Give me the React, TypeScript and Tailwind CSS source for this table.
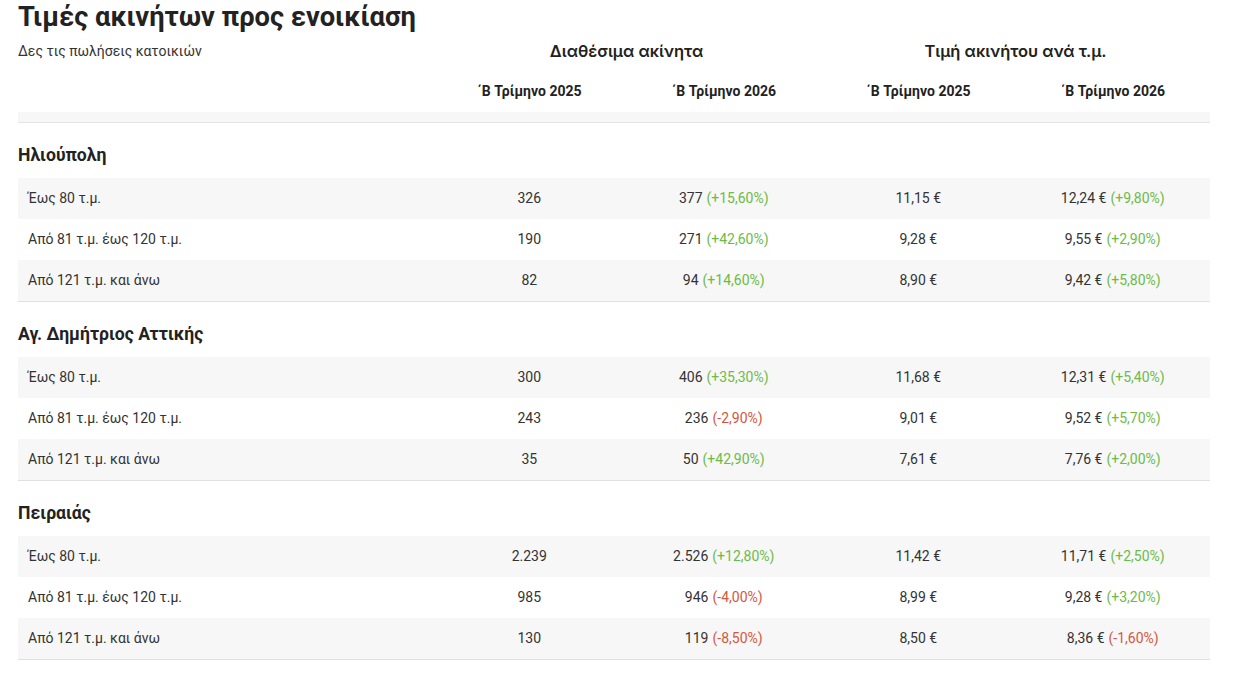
import React from 'react';

type Cell = { value: string; change?: string };
type Row = { label: string; cells: Cell[] };
type Area = { name: string; rows: Row[] };

const areas: Area[] = [
  {
    name: 'Ηλιούπολη',
    rows: [
      { label: 'Έως 80 τ.μ.', cells: [{ value: '326' }, { value: '377', change: '+15,60%' }, { value: '11,15 €' }, { value: '12,24 €', change: '+9,80%' }] },
      { label: 'Από 81 τ.μ. έως 120 τ.μ.', cells: [{ value: '190' }, { value: '271', change: '+42,60%' }, { value: '9,28 €' }, { value: '9,55 €', change: '+2,90%' }] },
      { label: 'Από 121 τ.μ. και άνω', cells: [{ value: '82' }, { value: '94', change: '+14,60%' }, { value: '8,90 €' }, { value: '9,42 €', change: '+5,80%' }] },
    ],
  },
  {
    name: 'Αγ. Δημήτριος Αττικής',
    rows: [
      { label: 'Έως 80 τ.μ.', cells: [{ value: '300' }, { value: '406', change: '+35,30%' }, { value: '11,68 €' }, { value: '12,31 €', change: '+5,40%' }] },
      { label: 'Από 81 τ.μ. έως 120 τ.μ.', cells: [{ value: '243' }, { value: '236', change: '-2,90%' }, { value: '9,01 €' }, { value: '9,52 €', change: '+5,70%' }] },
      { label: 'Από 121 τ.μ. και άνω', cells: [{ value: '35' }, { value: '50', change: '+42,90%' }, { value: '7,61 €' }, { value: '7,76 €', change: '+2,00%' }] },
    ],
  },
  {
    name: 'Πειραιάς',
    rows: [
      { label: 'Έως 80 τ.μ.', cells: [{ value: '2.239' }, { value: '2.526', change: '+12,80%' }, { value: '11,42 €' }, { value: '11,71 €', change: '+2,50%' }] },
      { label: 'Από 81 τ.μ. έως 120 τ.μ.', cells: [{ value: '985' }, { value: '946', change: '-4,00%' }, { value: '8,99 €' }, { value: '9,28 €', change: '+3,20%' }] },
      { label: 'Από 121 τ.μ. και άνω', cells: [{ value: '130' }, { value: '119', change: '-8,50%' }, { value: '8,50 €' }, { value: '8,36 €', change: '-1,60%' }] },
    ],
  },
];

const quarters = ['΄Β Τρίμηνο 2025', '΄Β Τρίμηνο 2026', '΄Β Τρίμηνο 2025', '΄Β Τρίμηνο 2026'];

function ValueCell({ cell }: { cell: Cell }) {
  const negative = cell.change?.startsWith('-');
  return (
    <div className="flex items-center justify-center">
      {cell.value}
      {cell.change && (
        <span className={`ml-1 ${negative ? 'text-[#d4573d]' : 'text-[#6dbb47]'}`}>({cell.change})</span>
      )}
    </div>
  );
}

export default function App() {
  return (
    <div className="min-h-screen bg-white font-['Roboto',sans-serif] text-[#333]">
      <div className="w-[1192px] ml-[18px]">
        <h1 className="h-[36px] text-[27.3px] leading-[34px] font-bold text-[#222]">Τιμές ακινήτων προς ενοικίαση</h1>

        {/* Table header */}
        <div className="grid grid-cols-[414px_repeat(4,1fr)]">
          <div className="h-[30px] flex items-center text-[14px] text-[#333]">Δες τις πωλήσεις κατοικιών</div>
          <div className="col-span-2 h-[30px] flex items-center justify-center font-['Inter',sans-serif] text-[16.5px] font-semibold text-[#222]">Διαθέσιμα ακίνητα</div>
          <div className="col-span-2 h-[30px] flex items-center justify-center font-['Inter',sans-serif] text-[16.5px] font-semibold text-[#222]">Τιμή ακινήτου ανά τ.μ.</div>

          <div className="h-[46px]" />
          {quarters.map((q, i) => (
            <div key={i} className="h-[46px] pt-[13px] leading-[24px] text-center text-[14px] font-bold text-[#222]">{q}</div>
          ))}
        </div>
        <div className="h-[11px] bg-[#f7f7f7] border-b border-[#e4e4e4]" />

        {/* Areas */}
        {areas.map((area) => (
          <div key={area.name} className="border-b border-[#e0e0e0]">
            <div className="h-[55px] pt-[20px] leading-[24px] text-[17.6px] font-bold text-[#222]">{area.name}</div>
            {area.rows.map((row, idx) => (
              <div
                key={row.label}
                className={`grid grid-cols-[414px_repeat(4,1fr)] h-[41px] items-center text-[14px] ${idx % 2 === 0 ? 'bg-[#f7f7f7]' : 'bg-white'}`}
              >
                <div className="pl-[10px]">{row.label}</div>
                {row.cells.map((c, i) => (
                  <ValueCell key={i} cell={c} />
                ))}
              </div>
            ))}
          </div>
        ))}
      </div>
    </div>
  );
}
